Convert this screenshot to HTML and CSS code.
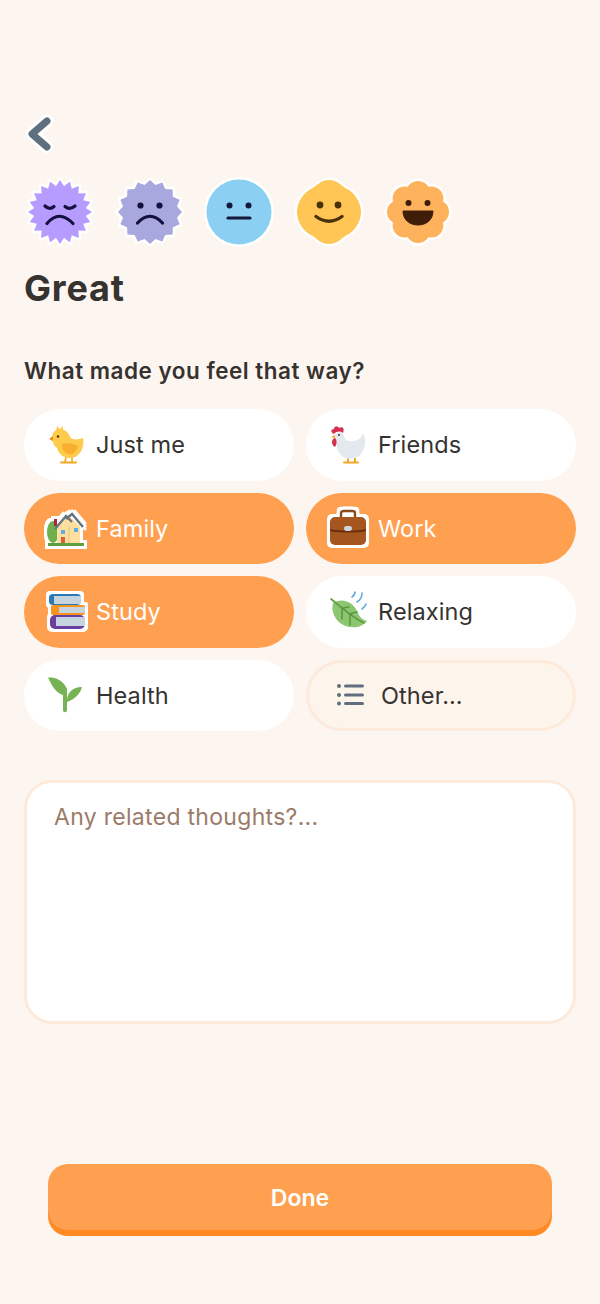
FILE: index.html
```html
<!DOCTYPE html>
<html lang="en">
<head>
  <meta charset="UTF-8">
  <meta name="viewport" content="width=device-width, initial-scale=1.0">
  <title>Mood Details</title>
  <link rel="stylesheet" href="styles.css">
</head>
<body>
  <div class="screen">
    <button class="back" aria-label="Back">
      <svg width="44" height="44" viewBox="0 0 44 44" fill="none" stroke-linecap="round" stroke-linejoin="round">
        <path d="M23 9L8 22L23 35" stroke="#fff" stroke-width="13"/>
        <path d="M23 9L8 22L23 35" stroke="#5f6f7d" stroke-width="7"/>
      </svg>
    </button>

    <div class="moods">
      <svg class="face" viewBox="-36 -36 72 72">
        <polygon class="halo" fill="#b79cff" points="32,0 25.7,4.1 30.4,9.9 23.2,11.8 25.9,18.8 18.4,18.4 18.8,25.9 11.8,23.2 9.9,30.4 4.1,25.7 0,32 -4.1,25.7 -9.9,30.4 -11.8,23.2 -18.8,25.9 -18.4,18.4 -25.9,18.8 -23.2,11.8 -30.4,9.9 -25.7,4.1 -32,0 -25.7,-4.1 -30.4,-9.9 -23.2,-11.8 -25.9,-18.8 -18.4,-18.4 -18.8,-25.9 -11.8,-23.2 -9.9,-30.4 -4.1,-25.7 0,-32 4.1,-25.7 9.9,-30.4 11.8,-23.2 18.8,-25.9 18.4,-18.4 25.9,-18.8 23.2,-11.8 30.4,-9.9 25.7,-4.1"/>
        <path d="M-15 -6Q-10.5 -1.5 -6 -5.5M5 -5.5Q9.5 -1.5 15 -6M-13 11.5Q-1 -3 13 11.5" fill="none" stroke="#14103f" stroke-width="3.2" stroke-linecap="round"/>
      </svg>
      <svg class="face" viewBox="-36 -36 72 72">
        <polygon class="halo" fill="#a8a8df" points="32,0 27,5.4 29.6,12.3 22.9,15.3 22.6,22.6 15.3,22.9 12.3,29.6 5.4,27 0,32 -5.4,27 -12.3,29.6 -15.3,22.9 -22.6,22.6 -22.9,15.3 -29.6,12.3 -27,5.4 -32,0 -27,-5.4 -29.6,-12.3 -22.9,-15.3 -22.6,-22.6 -15.3,-22.9 -12.3,-29.6 -5.4,-27 0,-32 5.4,-27 12.3,-29.6 15.3,-22.9 22.6,-22.6 22.9,-15.3 29.6,-12.3 27,-5.4"/>
        <circle cx="-9.5" cy="-6.5" r="3.1" fill="#14103f"/>
        <circle cx="9.5" cy="-6.5" r="3.1" fill="#14103f"/>
        <path d="M-12.5 11Q0 -2.5 12.5 11" fill="none" stroke="#14103f" stroke-width="3.2" stroke-linecap="round"/>
      </svg>
      <svg class="face" viewBox="-36 -36 72 72">
        <circle class="halo" r="32.5" fill="#8bcff3"/>
        <circle cx="-9.5" cy="-6.5" r="3" fill="#14183a"/>
        <circle cx="9.5" cy="-6.5" r="3" fill="#14183a"/>
        <path d="M-11 6H11" stroke="#14183a" stroke-width="3.2" stroke-linecap="round"/>
      </svg>
      <svg class="face" viewBox="-36 -36 72 72">
        <path class="halo" d="M0 -32C9 -32 12 -26 18 -23C25 -20 32 -10 32 0C32 10 25 20 18 23C12 26 9 32 0 32C-9 32 -12 26 -18 23C-25 20 -32 10 -32 0C-32 -10 -25 -20 -18 -23C-12 -26 -9 -32 0 -32Z" fill="#ffc655"/>
        <circle cx="-9" cy="-7" r="3.4" fill="#4a3208"/>
        <circle cx="9" cy="-7" r="3.4" fill="#4a3208"/>
        <path d="M-13 4.5Q0 14 13 4.5" fill="none" stroke="#4a3208" stroke-width="3.4" stroke-linecap="round"/>
      </svg>
      <svg class="face" viewBox="-36 -36 72 72">
        <g fill="#fff">
          <circle r="27"/><circle cy="-19" r="14.5"/><circle cy="19" r="14.5"/><circle cx="-19" r="14.5"/><circle cx="19" r="14.5"/>
          <circle cx="-13.4" cy="-13.4" r="14.5"/><circle cx="13.4" cy="-13.4" r="14.5"/><circle cx="-13.4" cy="13.4" r="14.5"/><circle cx="13.4" cy="13.4" r="14.5"/>
        </g>
        <g fill="#ffb25c">
          <circle r="26"/><circle cy="-19" r="12"/><circle cy="19" r="12"/><circle cx="-19" r="12"/><circle cx="19" r="12"/>
          <circle cx="-13.4" cy="-13.4" r="12"/><circle cx="13.4" cy="-13.4" r="12"/><circle cx="-13.4" cy="13.4" r="12"/><circle cx="13.4" cy="13.4" r="12"/>
        </g>
        <circle cx="-9.5" cy="-9" r="3" fill="#3f1d08"/>
        <circle cx="9.5" cy="-9" r="3" fill="#3f1d08"/>
        <path d="M-15 -1H15C15 8 8 13 0 13C-8 13 -15 8 -15 -1Z" fill="#3f1d08" stroke="#3f1d08" stroke-linejoin="round"/>
      </svg>
    </div>

    <h1 class="title">Great</h1>
    <h2 class="question">What made you feel that way?</h2>

    <div class="chips">
      <button class="chip">
        <svg class="chip-icon" viewBox="0 0 44 44">
          <path d="M22 34L21 39M28 34L28 39" stroke="#f5a623" stroke-width="1.6" stroke-linecap="round"/>
          <path d="M17 39.5H24M25 39.5H32" stroke="#f5a623" stroke-width="2" stroke-linecap="round"/>
          <path d="M8 15C8 9 12 6 16 6C21 6 25 10 26 14C28 17 33 17 39 15C41 24 36 35 26 35C18 35 14 29 13 25C10 23 8 19 8 15Z" fill="#ffcb4c"/>
          <path d="M18 21C24 19 31 21 34 23C33 30 26 33 22 30C19 28 18 25 18 21Z" fill="#f9ae2f"/>
          <path d="M12 8L13 3L16 6L19 3L19 9Z" fill="#ffcb4c"/>
          <path d="M9 13L5 16L9 18Z" fill="#f28a1e"/>
          <circle cx="14" cy="13.5" r="1.2" fill="#5a2a0a"/>
        </svg>
        <span>Just me</span>
      </button>
      <button class="chip">
        <svg class="chip-icon" viewBox="0 0 44 44">
          <path d="M22 35V39M29 35V39" stroke="#f5a623" stroke-width="2"/>
          <path d="M18 39.5H24M25 39.5H32" stroke="#f5a623" stroke-width="2" stroke-linecap="round"/>
          <path d="M9 13C10 8 17 8 18 13C19 18 23 19 28 18C33 17 36 14 37 10C41 18 39 27 34 32C27 38 17 37 12 28C10 24 10 18 9 13Z" fill="#e3e9ee"/>
          <path d="M8 11C4 9 5 6 8 6C8 3 12 3 13 5C16 3 19 5 17 10C14 8 11 8 8 11Z" fill="#d62f4d"/>
          <path d="M9 15C5 16 5 22 9 24C11 21 11 17 9 15Z" fill="#d62f4d"/>
          <path d="M9 12L5 14L9 15Z" fill="#f5a623"/>
          <circle cx="13" cy="12" r="1" fill="#333"/>
        </svg>
        <span>Friends</span>
      </button>
      <button class="chip active">
        <svg class="chip-icon sticker" viewBox="0 0 44 44">
          <ellipse cx="9" cy="26" rx="6" ry="11" fill="#6fb04e"/>
          <rect x="10" y="13" width="3" height="7" fill="#a52840"/>
          <path d="M13 21L24 9L36 20V37H13Z" fill="#ffdfa0"/>
          <path d="M11 23L22 10L28 16M22 13L28 8L39 21" fill="none" stroke="#66757f" stroke-width="2.4"/>
          <rect x="17" y="24" width="4" height="4" fill="#5dade2"/>
          <rect x="30" y="22" width="4" height="4" fill="#5dade2"/>
          <rect x="17" y="31" width="4" height="6" fill="#d9613c"/>
          <path d="M25 20V37" stroke="#e8c176"/>
          <rect x="4" y="37" width="36" height="3" fill="#5f9e3e"/>
        </svg>
        <span>Family</span>
      </button>
      <button class="chip active">
        <svg class="chip-icon sticker" viewBox="0 0 44 44">
          <path d="M15 11V7C15 5.5 16 5 18 5H26C28 5 29 5.5 29 7V11" fill="none" stroke="#8a4a1c" stroke-width="2.4"/>
          <rect x="4" y="11" width="36" height="28" rx="5" fill="#a5561f"/>
          <path d="M4 23C10 25 34 25 40 23V25C34 27 10 27 4 25Z" fill="#6b2d0f"/>
          <rect x="18" y="20" width="8" height="5" rx="2.4" fill="#ccd6dd"/>
        </svg>
        <span>Work</span>
      </button>
      <button class="chip active">
        <svg class="chip-icon sticker" viewBox="0 0 44 44">
          <rect x="5" y="4" width="32" height="11" rx="4" fill="#2a7ab8"/>
          <rect x="10" y="6" width="27" height="8" fill="#c5d4de"/>
          <rect x="7" y="15" width="34" height="10" rx="2" fill="#f7941d"/>
          <rect x="15" y="17" width="26" height="6" fill="#c5d4de"/>
          <rect x="6" y="25" width="35" height="14" rx="5" fill="#6a3fa0"/>
          <rect x="12" y="27" width="29" height="9" fill="#c5d4de"/>
        </svg>
        <span>Study</span>
      </button>
      <button class="chip">
        <svg class="chip-icon" viewBox="0 0 44 44">
          <path d="M7 13C14 8 26 10 31 21C33 27 37 30 41 31C35 39 22 39 14 33C8 28 5 20 7 13Z" fill="#8cc671"/>
          <path d="M5 9C14 16 26 27 38 33M16 18L16 29M24 25L24 35M16 18L23 17M23 24L31 22" fill="none" stroke="#5a9a3e" stroke-width="1.6" stroke-linecap="round"/>
          <path d="M26 7Q29 5 29 2M31 12Q36 9 36 3M36 19Q39 17 40 14" fill="none" stroke="#5dade2" stroke-width="1.6" stroke-linecap="round"/>
        </svg>
        <span>Relaxing</span>
      </button>
      <button class="chip">
        <svg class="chip-icon" viewBox="0 0 44 44">
          <path d="M4 4.5C10 4 19 6 23 16V37C23 40 19 40 19 37V22C12 20 8 13 4 4.5Z" fill="#77b255"/>
          <path d="M23 26C24 20 28 14 38 14C36 21 31 26 23 29Z" fill="#77b255"/>
        </svg>
        <span>Health</span>
      </button>
      <button class="chip other">
        <svg class="chip-icon" viewBox="0 0 44 44">
          <g fill="#5f6f7d">
            <circle cx="10" cy="13" r="2"/><circle cx="10" cy="22" r="2"/><circle cx="10" cy="30.5" r="2"/>
            <rect x="15" y="11.5" width="20" height="3" rx="1.5"/><rect x="15" y="20.5" width="20" height="3" rx="1.5"/><rect x="15" y="29" width="20" height="3" rx="1.5"/>
          </g>
        </svg>
        <span>Other...</span>
      </button>
    </div>

    <textarea class="thoughts" placeholder="Any related thoughts?..."></textarea>

    <button class="done">Done</button>
  </div>
</body>
</html>
```

FILE: styles.css
```css
body {
  font-family: Inter, "Noto Sans", sans-serif;
  background-color: #fdf6f0;
  margin: 0;
  color: #36322f;
}
button {
  font-family: inherit;
  border: none;
  padding: 0;
  cursor: pointer;
}
.screen {
  width: 600px;
  height: 1304px;
  box-sizing: border-box;
  padding: 112px 24px 0;
  overflow: hidden;
}
.back {
  display: block;
  width: 44px;
  height: 44px;
  background: none;
}
.moods {
  display: flex;
  gap: 17.5px;
  margin-top: 20px;
}
.face {
  width: 72px;
  height: 72px;
  flex: none;
}
.halo {
  stroke: #fff;
  stroke-width: 5px;
  stroke-linejoin: round;
  paint-order: stroke;
}
.title {
  font-size: 36px;
  line-height: 40px;
  font-weight: 700;
  letter-spacing: 0.8px;
  margin: 20px 0 0;
}
.question {
  font-size: 22.5px;
  line-height: 28px;
  font-weight: 600;
  letter-spacing: 0.5px;
  margin: 49px 0 0;
}
.chips {
  display: grid;
  grid-template-columns: 1fr 1fr;
  grid-auto-rows: 71.5px;
  gap: 12px;
  margin-top: 24px;
}
.chip {
  display: flex;
  align-items: center;
  gap: 8px;
  padding-left: 20px;
  background: #fff;
  border-radius: 36px;
  font-size: 23.5px;
  letter-spacing: 0.1px;
  color: #36322f;
}
.chip-icon {
  width: 44px;
  height: 44px;
  flex: none;
}
.chip.active {
  background: #ff9f50;
  color: #fff;
}
.chip.other {
  background: #fdf4ec;
  border: 3px solid #fdeadb;
  padding-left: 20px;
}
.sticker {
  filter: drop-shadow(3px 0 0 #fff) drop-shadow(-3px 0 0 #fff) drop-shadow(0 3px 0 #fff) drop-shadow(0 -3px 0 #fff);
}
.thoughts {
  display: block;
  width: 100%;
  height: 244px;
  box-sizing: border-box;
  margin-top: 49px;
  padding: 20px 27px;
  background: #fff;
  border: 3px solid #fdeadb;
  border-radius: 28px;
  font-family: inherit;
  font-size: 23px;
  line-height: 28px;
  letter-spacing: 0.3px;
  resize: none;
  outline: none;
}
.thoughts::placeholder {
  color: #9b7b68;
  opacity: 1;
}
.done {
  display: block;
  width: 504px;
  height: 66px;
  margin: 140px auto 0;
  padding-top: 2px;
  background: #ff9f50;
  border-radius: 20px;
  box-shadow: 0 6px 0 #ff8a24;
  color: #fff;
  font-size: 23px;
  font-weight: 600;
}
```
